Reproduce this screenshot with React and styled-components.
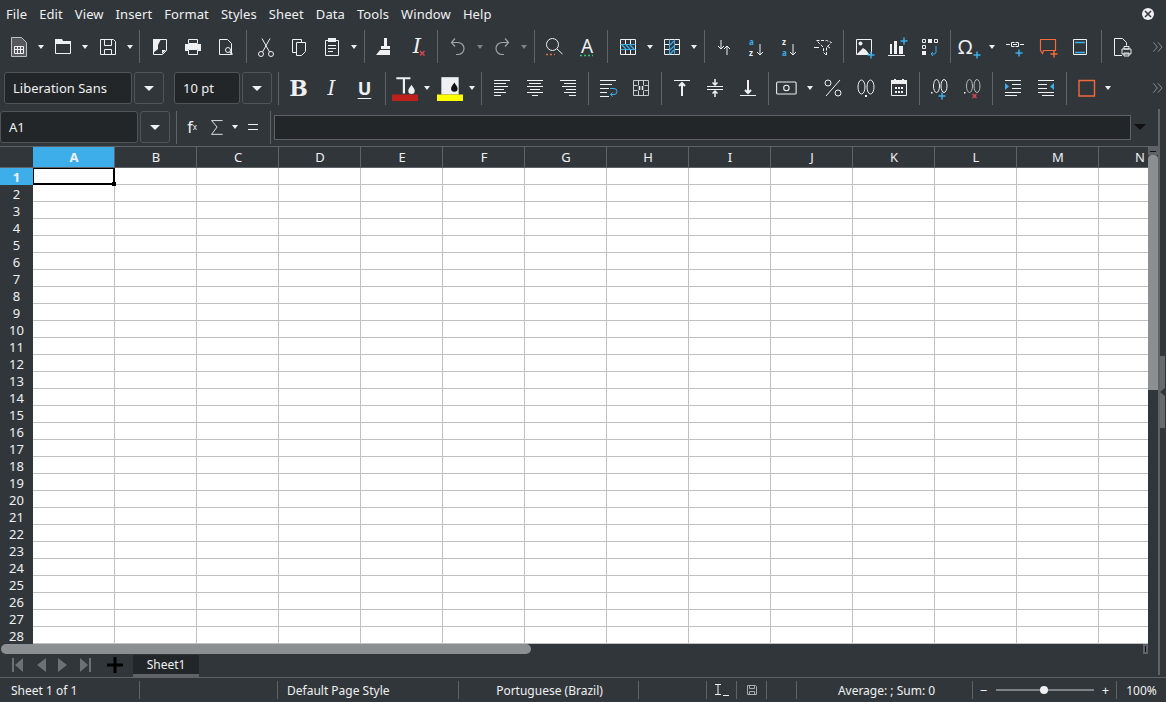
import React from 'react'
import styled, { createGlobalStyle } from 'styled-components'

const FG = '#eff0f1'
const BLUE = '#3daee9'

const GlobalStyle = createGlobalStyle`
html, body { margin: 0; padding: 0; background: #31363b; }
body { font-family: "Noto Sans", sans-serif; font-size: 13px; color: ${FG}; overflow: hidden; }
`

const Window = styled.div`
width: 1166px;
height: 702px;
display: flex;
flex-direction: column;
background: #31363b;
overflow: hidden;
`
const MenuBar = styled.div`
height: 28px;
display: flex;
align-items: center;
flex: none;
`
const MenuItem = styled.span`
padding: 0 6px;
line-height: 28px;
letter-spacing: 0.09px;
`
const CloseBtn = styled.span`
margin-left: auto;
margin-right: 12px;
width: 12px;
height: 12px;
border-radius: 50%;
background: ${FG};
display: flex;
align-items: center;
justify-content: center;
`
const Toolbar = styled.div`
display: flex;
align-items: center;
flex: none;
box-sizing: border-box;
height: ${p => p.$h}px;
margin-top: ${p => p.$mt || 0}px;
padding-left: ${p => p.$pl || 0}px;
padding-bottom: ${p => p.$pb || 0}px;
`
const IconBtn = styled.span`
flex: none;
width: ${p => p.$w || 33}px;
height: 33px;
display: flex;
align-items: center;
justify-content: center;
`
const Glyph = styled.span`
font-family: ${p => p.$serif ? '"DejaVu Serif", serif' : '"Noto Sans", sans-serif'};
font-weight: ${p => p.$bold ? 700 : 400};
font-style: ${p => p.$italic ? 'italic' : 'normal'};
font-size: ${p => p.$size || 22}px;
line-height: 1;
text-decoration: ${p => p.$under ? 'underline' : 'none'};
text-underline-offset: 3px;
`
const GlyphIcon = styled.span`
position: relative;
width: 24px;
height: 24px;
display: flex;
align-items: center;
justify-content: ${p => p.$start ? 'flex-start' : 'center'};
& > svg {
  position: absolute;
  left: 0;
  top: 0;
}
`
const Arrow = styled.span`
flex: none;
width: 11.5px;
height: 33px;
display: flex;
align-items: center;
justify-content: center;
&::before {
  content: "";
  border-left: 3.5px solid transparent;
  border-right: 3.5px solid transparent;
  border-top: 4px solid ${p => p.$dim ? '#7f8285' : FG};
}
`
const Sep = styled.span`
flex: none;
width: 1px;
height: 33px;
margin: 0 ${p => p.$r ?? 3}px 0 ${p => p.$l ?? 3.5}px;
background: #606468;
`
const Overflow = styled.span`
margin-left: auto;
width: 16px;
display: flex;
justify-content: center;
`
const ComboText = styled.div`
flex: none;
width: ${p => p.$w}px;
height: 32px;
box-sizing: border-box;
background: #232629;
border: 1px solid #50555a;
border-radius: 3px;
padding-left: 8px;
display: flex;
align-items: center;
`
const ComboBtn = styled.div`
flex: none;
width: 30px;
height: 32px;
margin: 0 ${p => p.$mr || 0}px 0 2px;
box-sizing: border-box;
border: 1px solid #50555a;
border-radius: 3px;
display: flex;
align-items: center;
justify-content: center;
&::before {
  content: "";
  border-left: 5px solid transparent;
  border-right: 5px solid transparent;
  border-top: 5px solid ${FG};
}
`
const Body = styled.div`
flex: 1;
display: flex;
min-height: 0;
margin-top: 3px;
`
const LeftCol = styled.div`
width: 1158px;
flex: none;
display: flex;
flex-direction: column;
`
const Strip = styled.div`
flex: none;
width: 8px;
height: 566px;
border-left: 2px solid #5f6368;
box-sizing: border-box;
`
const DeckHandle = styled.div`
margin-top: 247px;
width: 5px;
height: 72px;
background: #656a6e;
display: flex;
align-items: center;
&::before {
  content: "";
  border-top: 4px solid transparent;
  border-bottom: 4px solid transparent;
  border-right: 5px solid #31363b;
}
`
const FormulaInput = styled.div`
flex: none;
width: 857px;
height: 25px;
margin-left: 3px;
box-sizing: border-box;
background: #232629;
border: 1px solid #5f6368;
`
const BlackArrow = styled.span`
margin-left: 3px;
border-left: 6px solid transparent;
border-right: 6px solid transparent;
border-top: 6px solid #111;
`
const SheetArea = styled.div`
display: flex;
height: 497px;
flex: none;
border-top: 1px solid #5f6368;
`
const Table = styled.div`
width: 1148px;
flex: none;
position: relative;
overflow: hidden;
background: #fff;
`
const HeadRow = styled.div`
display: flex;
height: 21px;
box-sizing: border-box;
border-bottom: 1px solid #5f6368;
background: #31363b;
`
const Corner = styled.div`
flex: none;
width: 33px;
background: #31363b;
`
const ColHead = styled.div`
flex: none;
width: 82px;
box-sizing: border-box;
padding-left: 1px;
border-right: 1px solid #5f6368;
text-align: center;
line-height: 20px;
font-weight: ${p => p.$active ? 700 : 400};
background: ${p => p.$active ? BLUE : '#31363b'};
`
const Row = styled.div`
display: flex;
height: 17px;
`
const RowHead = styled.div`
flex: none;
width: 33px;
box-sizing: border-box;
text-align: center;
line-height: 18px;
font-weight: ${p => p.$active ? 700 : 400};
background: ${p => p.$active ? BLUE : '#31363b'};
`
const Cell = styled.div`
flex: none;
width: 82px;
box-sizing: border-box;
border-right: 1px solid #c0c0c0;
border-bottom: 1px solid #c0c0c0;
`
const CellCursor = styled.div`
position: absolute;
left: 33px;
top: 21px;
width: 82px;
height: 17px;
box-sizing: border-box;
border: 2px solid #000;
border-top-width: 1px;
border-left-width: 1px;
&::after {
  content: "";
  position: absolute;
  right: -3px;
  bottom: -3px;
  width: 4px;
  height: 4px;
  background: #000;
}
`
const VScroll = styled.div`
flex: none;
width: 10px;
display: flex;
flex-direction: column;
`
const VGrip = styled.div`
height: 8px;
flex: none;
background: #5f6368;
display: flex;
align-items: center;
justify-content: center;
&::before {
  content: "";
  width: 6px;
  height: 1px;
  background: #111;
}
`
const VThumb = styled.div`
height: 235px;
flex: none;
background: #8c8f92;
border-radius: 4px 4px 0 0;
`
const HScroll = styled.div`
height: 10px;
flex: none;
display: flex;
justify-content: space-between;
padding: 0 10px 0 1px;
`
const HThumb = styled.div`
width: 530px;
height: 10px;
background: #8c8f92;
border-radius: 5px;
`
const HGrip = styled.div`
width: 5px;
height: 10px;
background: #5f6368;
display: flex;
align-items: center;
justify-content: center;
&::before {
  content: "";
  width: 1px;
  height: 6px;
  background: #111;
}
`
const TabBar = styled.div`
flex: 1;
display: flex;
align-items: stretch;
`
const TabNav = styled.div`
flex: none;
width: 133px;
box-sizing: border-box;
padding: 0 0 1px 3px;
display: flex;
align-items: center;
`
const NavBtn = styled.span`
flex: none;
width: ${p => p.$w || 23}px;
display: flex;
justify-content: center;
`
const SheetTab = styled.div`
flex: none;
width: 66px;
box-sizing: border-box;
margin-top: 1px;
background: #232629;
border-bottom: 3px solid #5f6368;
text-align: center;
font-size: 12px;
line-height: 19px;
`
const StatusBar = styled.div`
flex: none;
height: 25px;
box-sizing: border-box;
border-top: 1px solid #5f6368;
display: flex;
align-items: center;
font-size: 12px;
color: #eff0f1;
`
const StatusCell = styled.div`
flex: none;
width: ${p => p.$w}px;
height: 18px;
box-sizing: border-box;
border-right: ${p => p.$last ? 'none' : '1px solid #5f6368'};
display: flex;
align-items: center;
justify-content: ${p => p.$left !== undefined ? 'flex-start' : 'center'};
padding-left: ${p => p.$left ?? p.$nudge ?? 0}px;
`
const ZoomSign = styled.span`
flex: none;
width: 24px;
text-align: center;
font-size: 13px;
`
const ZoomTrack = styled.div`
flex: none;
width: 98px;
height: 2px;
background: #7f8285;
position: relative;
`
const ZoomKnob = styled.span`
position: absolute;
left: 44px;
top: -3px;
width: 8px;
height: 8px;
border-radius: 50%;
background: ${FG};
`

const Svg = ({ children, size = 24 }) => (
  <svg width={size} height={size} viewBox="0 0 24 24" fill="none" stroke={FG} strokeWidth="1">{children}</svg>
)
const Plus = ({ x = 19, y = 19, c = BLUE }) => (
  <path d={`M${x - 3.5} ${y}h7M${x} ${y - 3.5}v7`} stroke={c} strokeWidth="1.5" />
)
const Lines = ({ rows }) => rows.map(([x, y, w], i) => <path key={i} d={`M${x} ${y}.5h${w}`} />)
const Label = ({ x, y, c = FG, s = 8, children }) => (
  <text x={x} y={y} fill={c} stroke="none" fontSize={s} fontWeight="700" fontFamily="Noto Sans">{children}</text>
)

const icons = {
  doc: <Svg><path d="M4.500 2.500h10l5 5v14h-15z" stroke="#bdbfc1" fill="#55595d" /><path d="M7.500 11.500h9v7h-9zM7.500 14.500h9M10.500 11.500v7M13.500 11.500v7" stroke="#eff0f1" /></Svg>,
  open: <Svg><path d="M4.500 6.500h15v12h-15z" /><path d="M4 4h7l1 2h8v3H4z" fill={FG} stroke="none" /></Svg>,
  save: <Svg><path d="M4.500 4.500h13l2 2v13h-15z" /><path d="M8.500 4.500v6h7v-6M8.500 19.500v-5h7v5" /></Svg>,
  exportDoc: <Svg><path d="M5.500 4.500h13v11l-4 4h-9z" /><path d="M5 4h8l-3 6v4l-5 4z" fill={FG} stroke="none" /><path d="M18 15l-4 4v-4z" fill={FG} stroke="none" /></Svg>,
  print: <Svg><path d="M7.500 4.500h9v4h-9z" /><path d="M4 9h16v7h-3v-2H7v2H4z" fill={FG} stroke="none" /><path d="M7.500 14.500h9v5h-9z" /></Svg>,
  preview: <Svg><path d="M5.500 4.500h8l4 4v11h-12z" /><circle cx="14" cy="15" r="2.500" /><path d="M16 17l2.500 2.500" strokeWidth="1.500" /></Svg>,
  cut: <Svg><circle cx="7" cy="19" r="2.500" /><circle cx="17" cy="19" r="2.500" /><path d="M8.500 17L16 3.500M15.500 17L8 3.500" /></Svg>,
  copy: <Svg><path d="M5.500 4.500h9v13h-9z" /><path d="M9.500 7.500h9v9l-4 4h-5z" fill="#31363b" /></Svg>,
  paste: <Svg><path d="M5.500 5.500h13v15h-13z" /><path d="M8 3h8v4H8z" fill={FG} stroke="none" /><path d="M8 10.500h8M8 13.500h8M8 16.500h5" /></Svg>,
  clone: <Svg><path d="M12 3h3v8h-3zM9 11h9v3H9z" fill={FG} stroke="none" /><path d="M8 15h10v5H4z" fill={FG} stroke="none" /></Svg>,
  undo: <Svg><g stroke="#a0a3a5" strokeWidth="1.200"><path d="M9 3.500L5.500 7.500l3.500 4" /><path d="M6 7.500h6a6 6 0 0 1 0 12h-2" /></g></Svg>,
  redo: <Svg><g stroke="#a0a3a5" strokeWidth="1.200"><path d="M15 3.500l3.500 4-3.500 4" /><path d="M18 7.500h-6a6 6 0 0 0 0 12h2" /></g></Svg>,
  find: <Svg><circle cx="10.500" cy="9.500" r="6" /><path d="M15 14l5.500 5" /><path d="M4 19.500h9" stroke="#e0703f" strokeWidth="1.500" strokeDasharray="2 2" /></Svg>,
  rows: <Svg><path d="M6 10l4 4M10 10l4 4M14 10l4 4" stroke={BLUE} strokeWidth="1.300" /><path d="M4.500 4.500h15v15h-15zM9.500 4.500v5M14.500 4.500v5M9.500 14.500v5M14.500 14.500v5" /><path d="M4.500 9.500h15M4.500 14.500h15" stroke={BLUE} /></Svg>,
  cols: <Svg><path d="M10 10l4-4M10 15l4-4M10 19l4-4" stroke={BLUE} strokeWidth="1.300" /><path d="M4.500 4.500h15v15h-15zM4.500 9.500h5M4.500 14.500h5M14.500 9.500h5M14.500 14.500h5" /><path d="M9.500 4.500v15M14.500 4.500v15" stroke={BLUE} /></Svg>,
  sort: <Svg><path d="M9 5v9M6 11l3 3 3-3M15 20v-9M12 14l3-3 3 3" /></Svg>,
  sortAz: <Svg><Label x="4" y="10" c={BLUE}>a</Label><Label x="4" y="20.500">z</Label><path d="M15 9v11M12 17l3 3 3-3" /></Svg>,
  sortZa: <Svg><Label x="4" y="10">z</Label><Label x="4" y="20.500" c={BLUE}>a</Label><path d="M15 9v11M12 17l3 3 3-3" /></Svg>,
  filter: <Svg><path d="M5.500 5.500h10l5 2-5 5v8l-3-3v-5l-7-7z" strokeDasharray="3 1.500" /><path d="M3 12.500h5M16 11l3 2" /></Svg>,
  image: <Svg><path d="M4.500 4.500h15v15h-15z" /><circle cx="8.500" cy="8.500" r="2" fill={FG} stroke="none" /><path d="M5 19l6-6 3 2 3 4z" fill={FG} stroke="none" /><Plus x="19" y="20" /></Svg>,
  chart: <Svg><path d="M5 9h2v10H5zM9 6h3v13H9zM14 11h4v8h-4z" fill={FG} stroke="none" /><path d="M3 20.500h17" /><Plus x="19" y="6" /></Svg>,
  pivot: <Svg><path d="M4.500 4.500h3v3h-3zM16.500 4.500h3v3h-3zM4.500 10.500h3v3h-3z" /><path d="M10 4h4v4h-4zM4 16h4v4H4z" fill={FG} stroke="none" /><path d="M18 11v6a2 2 0 0 1-2 2h-3M15 17l-2 2 2 2" stroke={BLUE} /></Svg>,
  link: <Svg><path d="M3 9.500h4M8.500 7.500h3M12.500 7.500h3v4h-3M11.500 11.500h-3v-4M17 9.500h4" /><path d="M10 9.500h4" /><Plus x="16" y="18" /></Svg>,
  comment: <Svg><path d="M4.500 4.500h15v11h-12l-1 3-2-3z" stroke="#f2693b" strokeWidth="1.200" /><Plus x="18" y="19" c="#f2693b" /></Svg>,
  headers: <Svg><path d="M4.500 4.500h13v15h-13z" /><path d="M6 7.500h10M6 17.500h10" stroke={BLUE} strokeWidth="1.300" /></Svg>,
  printArea: <Svg><path d="M13 20.500H5.500v-17h8l4 4v3" /><path d="M13 14h9v5h-9z" /><path d="M15 11.500h5V14h-5zM15 18h5v3h-5z" /></Svg>,
  chevrons: <Svg><path d="M5 5l6 7-6 7M12 5l6 7-6 7" stroke="#8f9294" strokeWidth="1.400" /></Svg>,
  fontColor: <Svg size={26}><path d="M4 2h13v2h-5v13h-2V4H4z" fill={FG} stroke="none" /><path d="M18 9c-1 2-3 3.500-3 5.500a3 3 0 0 0 6 0C21 12.500 19 11 18 9z" fill={FG} stroke="none" /><path d="M0 18h24v6H0z" fill="#c0201c" stroke="none" /></Svg>,
  highlight: <Svg size={26}><path d="M4 2h16v16H4z" fill={FG} stroke="none" /><path d="M16 7c-1 2-3 3.500-3 5.500a3 3 0 0 0 6 0C19 10.500 17 9 16 7z" fill="#111" stroke="none" /><path d="M0 18h24v6H0z" fill="#ffff00" stroke="none" /></Svg>,
  left: <Svg><Lines rows={[[4, 4, 16], [4, 7, 12], [4, 10, 14], [4, 13, 10], [4, 16, 12], [4, 19, 7]]} /></Svg>,
  center: <Svg><Lines rows={[[4, 4, 16], [6, 7, 12], [4, 10, 16], [7, 13, 10], [4, 16, 16], [9, 19, 6]]} /></Svg>,
  right: <Svg><Lines rows={[[4, 4, 16], [8, 7, 12], [6, 10, 14], [10, 13, 10], [8, 16, 12], [13, 19, 7]]} /></Svg>,
  wrap: <Svg><Lines rows={[[4, 4, 16], [4, 8, 12], [4, 12, 9], [4, 16, 7], [4, 20, 9]]} /><path d="M14 12.500h4a2.500 2.500 0 0 1 0 6h-3M16.500 16.500l-2 2 2 2" stroke={BLUE} /></Svg>,
  merge: <Svg><path d="M4.500 4.500h15v15h-15zM4.500 9.500h4M15.500 9.500h4M4.500 14.500h4M15.500 14.500h4M9.500 4.500v5M14.500 4.500v5M9.500 14.500v5M14.500 14.500v5" stroke="#c9cbcd" /><path d="M10.500 10v4M13.500 10v4" strokeWidth="1.500" /></Svg>,
  top: <Svg><path d="M4 4.500h16" /><path d="M12 20V8M9 10l3-3 3 3" strokeWidth="2" /></Svg>,
  middle: <Svg><path d="M4 10.500h16M4 13.500h16" /><path d="M12 3v6M9.500 6.500l2.500 2.500 2.500-2.500M12 21v-6M9.500 17.500l2.500-2.500 2.500 2.500" strokeWidth="1.500" /></Svg>,
  bottom: <Svg><path d="M4 19.500h16" /><path d="M12 4v12M9 14l3 3 3-3" strokeWidth="2" /></Svg>,
  currency: <Svg size={26}><rect x="1.500" y="6.500" width="18" height="11" rx="1" /><circle cx="10.500" cy="12" r="2.500" /></Svg>,
  percent: <Svg><circle cx="7" cy="7" r="3" /><circle cx="17" cy="17" r="3" /><path d="M19 4L5 20" /></Svg>,
  number: <Svg><ellipse cx="7.500" cy="11" rx="3.500" ry="7" /><ellipse cx="16.500" cy="11" rx="3.500" ry="7" /><path d="M11 20h2" strokeWidth="2" /></Svg>,
  date: <Svg><path d="M4.500 5.500h15v14h-15z" /><path d="M4 4h16v4H4zM7 3h2v3H7zM15 3h2v3h-2z" fill={FG} stroke="none" /><path d="M8 11h2v2H8zM11 11h2v2h-2zM14 11h2v2h-2zM8 15h2v2H8zM11 15h2v2h-2zM14 15h2v2h-2z" fill={FG} stroke="none" /></Svg>,
  addDec: <Svg><ellipse cx="9.500" cy="10" rx="3" ry="6.500" /><ellipse cx="17" cy="10" rx="3" ry="6.500" /><path d="M4 16h1.500v1.500H4z" fill={FG} stroke="none" /><Plus x="15" y="20" /></Svg>,
  delDec: <Svg><g stroke="#b4b6b8"><ellipse cx="9.500" cy="10" rx="3" ry="6.500" /><ellipse cx="17" cy="10" rx="3" ry="6.500" /></g><path d="M4 16h1.500v1.500H4z" fill={FG} stroke="none" /><path d="M12.500 18l4 4M16.500 18l-4 4" stroke="#da4453" strokeWidth="1.500" /></Svg>,
  indent: <Svg><Lines rows={[[4, 4, 16], [11, 8, 9], [11, 12, 9], [4, 16, 16], [4, 19, 12]]} /><path d="M4 7l4 3.500L4 14z" fill={BLUE} stroke="none" /></Svg>,
  outdent: <Svg><Lines rows={[[4, 4, 16], [4, 8, 9], [4, 12, 9], [4, 16, 16], [8, 19, 12]]} /><path d="M20 7l-4 3.500 4 3.500z" fill={BLUE} stroke="none" /></Svg>,
  border: <Svg><path d="M5 4.500h15.500v15.500H5z" stroke="#f2693b" strokeWidth="1.400" /></Svg>,
  sum: <Svg><path d="M17 5H5l6 7-6 8h12" /></Svg>,
  equal: <Svg><path d="M7 9.500h10M7 14.500h10" /></Svg>,
}

const clearIcon = (
  <GlyphIcon>
    <Glyph $serif $italic $size={21}>I</Glyph>
    <Svg><path d="M15 16l4.500 4.500M19.500 16L15 20.500" stroke="#da4453" strokeWidth="1.500" /></Svg>
  </GlyphIcon>
)
const spellIcon = (
  <GlyphIcon>
    <Glyph $size={19}>A</Glyph>
    <Svg><path d="M5 20.500h13" stroke="#2ecc71" strokeWidth="1.500" strokeDasharray="2 2" /></Svg>
  </GlyphIcon>
)
const omegaIcon = (
  <GlyphIcon $start>
    <Glyph $size={20}>Ω</Glyph>
    <Svg><Plus x="19" y="20" /></Svg>
  </GlyphIcon>
)
const fxIcon = (
  <GlyphIcon>
    <Glyph $size={16}>f</Glyph>
    <Glyph $size={8}>x</Glyph>
  </GlyphIcon>
)

const renderTools = items => items.map((item, i) => {
  if (item === '|') return <Sep key={i} />
  if (item === 'v') return <Arrow key={i} />
  if (item === 'x') return <Arrow key={i} $dim />
  if (typeof item === 'string') return <IconBtn key={i}>{icons[item]}</IconBtn>
  return <IconBtn key={i}>{item}</IconBtn>
})

const MENU = ['File', 'Edit', 'View', 'Insert', 'Format', 'Styles', 'Sheet', 'Data', 'Tools', 'Window', 'Help']
const TOOLS_1 = ['doc', 'v', 'open', 'v', 'save', 'v', '|', 'exportDoc', 'print', 'preview', '|', 'cut', 'copy', 'paste', 'v', '|', 'clone', clearIcon, '|', 'undo', 'x', 'redo', 'x', '|', 'find', spellIcon, '|', 'rows', 'v', 'cols', 'v', '|', 'sort', 'sortAz', 'sortZa', 'filter', '|', 'image', 'chart', 'pivot', '|', omegaIcon, 'v', 'link', 'comment', 'headers', '|', 'printArea']
const TOOLS_2 = [
  <Glyph $serif $bold>B</Glyph>, <Glyph $serif $italic $size={20}>I</Glyph>, <Glyph $bold $size={18} $under>U</Glyph>,
  '|', 'fontColor', 'v', 'highlight', 'v', '|', 'left', 'center', 'right', '|', 'wrap', 'merge', '|', 'top', 'middle', 'bottom', '|',
  'currency', 'v', 'percent', 'number', 'date', '|', 'addDec', 'delDec', '|', 'indent', 'outdent', '|', 'border', 'v',
]
const COLS = 'ABCDEFGHIJKLMN'.split('')
const ROWS = Array.from({ length: 28 }, (_, i) => i + 1)

const App = () => (
  <Window>
    <GlobalStyle />
    <MenuBar>
      {MENU.map(m => <MenuItem key={m}>{m}</MenuItem>)}
      <CloseBtn>
        <svg width="8" height="8" viewBox="0 0 8 8" stroke="#31363b" strokeWidth="1.500"><path d="M1 1l6 6M7 1L1 7" /></svg>
      </CloseBtn>
    </MenuBar>
    <Toolbar $h={35} $mt={1} $pl={2}>
      {renderTools(TOOLS_1)}
      <Overflow>{icons.chevrons}</Overflow>
    </Toolbar>
    <Toolbar $h={36} $mt={6} $pl={4}>
      <ComboText $w={128}>Liberation Sans</ComboText>
      <ComboBtn $mr={10} />
      <ComboText $w={66}>10 pt</ComboText>
      <ComboBtn />
      <Sep $l={6} $r={3} />
      {renderTools(TOOLS_2)}
      <Overflow>{icons.chevrons}</Overflow>
    </Toolbar>
    <Body>
      <LeftCol>
        <Toolbar $h={37} $pb={1}>
          <ComboText $w={138}>A1</ComboText>
          <ComboBtn />
          <Sep $l={6} $r={0} />
          <IconBtn $w={30}>{fxIcon}</IconBtn>
          <IconBtn $w={22}>{icons.sum}</IconBtn>
          <Arrow />
          <IconBtn $w={24}>{icons.equal}</IconBtn>
          <Sep $l={5} $r={0} />
          <FormulaInput />
          <BlackArrow />
        </Toolbar>
        <SheetArea>
          <Table>
            <HeadRow>
              <Corner />
              {COLS.map(c => <ColHead key={c} $active={c === 'A'}>{c}</ColHead>)}
            </HeadRow>
            {ROWS.map(r => (
              <Row key={r}>
                <RowHead $active={r === 1}>{r}</RowHead>
                {COLS.map(c => <Cell key={c} />)}
              </Row>
            ))}
            <CellCursor />
          </Table>
          <VScroll>
            <VGrip />
            <VThumb />
          </VScroll>
        </SheetArea>
        <HScroll>
          <HThumb />
          <HGrip />
        </HScroll>
        <TabBar>
          <TabNav>
            <NavBtn $w={29}>
              <svg width="12" height="14" viewBox="0 0 12 14" fill="#6d7174"><path d="M0 0h2v14H0zM11 0v14L3 7z" /></svg>
            </NavBtn>
            <NavBtn $w={18}>
              <svg width="9" height="14" viewBox="0 0 9 14" fill="#6d7174"><path d="M9 0v14L0 7z" /></svg>
            </NavBtn>
            <NavBtn $w={24}>
              <svg width="9" height="14" viewBox="0 0 9 14" fill="#6d7174"><path d="M0 0v14l9-7z" /></svg>
            </NavBtn>
            <NavBtn $w={22}>
              <svg width="12" height="14" viewBox="0 0 12 14" fill="#6d7174"><path d="M10 0h2v14h-2zM1 0v14l8-7z" /></svg>
            </NavBtn>
            <NavBtn $w={37}>
              <svg width="16" height="16" viewBox="0 0 16 16" fill="#000"><path d="M6.500 0h3v6.500H16v3H9.500V16h-3V9.500H0v-3h6.500z" /></svg>
            </NavBtn>
          </TabNav>
          <SheetTab>Sheet1</SheetTab>
        </TabBar>
      </LeftCol>
      <Strip>
        <DeckHandle />
      </Strip>
    </Body>
    <StatusBar>
      <StatusCell $w={140} $left={11}>Sheet 1 of 1</StatusCell>
      <StatusCell $w={138} />
      <StatusCell $w={181} $left={9}>Default Page Style</StatusCell>
      <StatusCell $w={180} $nudge={2}>Portuguese (Brazil)</StatusCell>
      <StatusCell $w={68} />
      <StatusCell $w={30}>
        <svg width="16" height="14" viewBox="0 0 16 14" fill="none" stroke={FG}><path d="M1 1.500h6M4 1.500v10M1 11.500h6M9 12.500h6" /></svg>
      </StatusCell>
      <StatusCell $w={30}>
        <svg width="12" height="12" viewBox="0 0 12 12" fill="none" stroke="#a9abad"><path d="M1.500 1.500h8l1 1v8h-9zM3.500 1.500v3h5v-3M3.500 10.500v-3h5v3" /></svg>
      </StatusCell>
      <StatusCell $w={30} />
      <StatusCell $w={176} $nudge={4}>Average: ; Sum: 0</StatusCell>
      <StatusCell $w={144}>
        <ZoomSign>−</ZoomSign>
        <ZoomTrack><ZoomKnob /></ZoomTrack>
        <ZoomSign>+</ZoomSign>
      </StatusCell>
      <StatusCell $w={49} $last>100%</StatusCell>
    </StatusBar>
  </Window>
)

export default App
